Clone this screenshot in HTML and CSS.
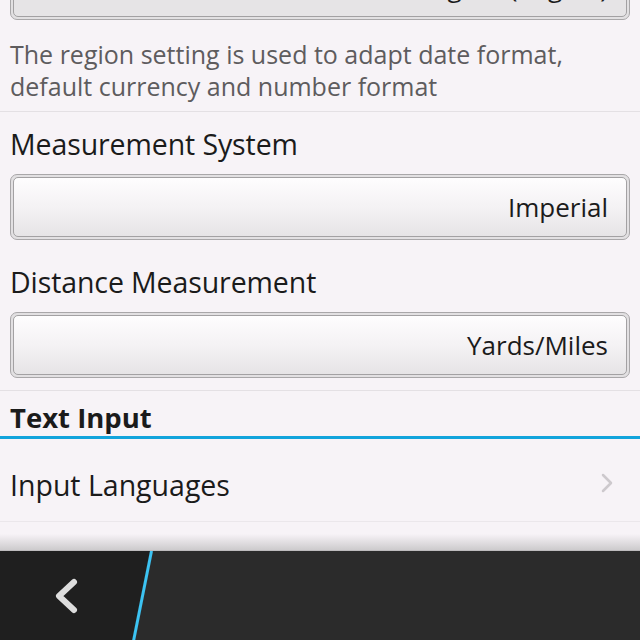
FILE: index.html
```html
<!DOCTYPE html>
<html lang="en">
<head>
    <meta charset="UTF-8">
    <meta name="viewport" content="width=device-width, initial-scale=1.0">
    <title>Language and Input</title>
    <link rel="stylesheet" href="styles.css">
</head>
<body>
    <div class="screen">
        <div class="content">
            <div class="section">
                <div class="dropdown first">
                    <div class="dropdown-face"><span>English (Region)</span></div>
                </div>
                <p class="hint">The region setting is used to adapt date format, default currency and number format</p>
            </div>

            <div class="section">
                <div class="label">Measurement System</div>
                <div class="dropdown">
                    <div class="dropdown-face"><span>Imperial</span></div>
                </div>
                <div class="label">Distance Measurement</div>
                <div class="dropdown">
                    <div class="dropdown-face"><span>Yards/Miles</span></div>
                </div>
            </div>

            <div class="group-header">Text Input</div>

            <div class="row">
                <span>Input Languages</span>
                <svg class="chevron" width="14" height="22" viewBox="0 0 14 22">
                    <path d="M3 3 L11 11 L3 19" fill="none" stroke="#cdc9cd" stroke-width="2.5" stroke-linecap="round" stroke-linejoin="round"/>
                </svg>
            </div>
        </div>

        <div class="action-bar">
            <svg class="back" width="170" height="90" viewBox="0 0 170 90">
                <polygon points="0,0 152,0 134,90 0,90" fill="#1f1f1f"/>
                <line x1="151.5" y1="0" x2="133.5" y2="90" stroke="#3cc3f2" stroke-width="3"/>
                <path d="M74 31 L59 45 L74 59" fill="none" stroke="#dddddd" stroke-width="6" stroke-linecap="round" stroke-linejoin="round"/>
            </svg>
        </div>
    </div>
</body>
</html>
```

FILE: styles.css
```css
body { margin: 0; background: #f7f3f7; font-family: "Open Sans", "Noto Sans", sans-serif; color: #1b1b1b; }
.screen { width: 640px; height: 640px; display: flex; flex-direction: column; overflow: hidden; }
.content { flex: 1; overflow: hidden; position: relative; }
.content::after { content: ""; position: absolute; left: 0; right: 0; bottom: 0; height: 16px; background: linear-gradient(to bottom, rgba(200, 198, 200, 0), rgba(200, 198, 200, 0.9)); }

.section { padding: 0 10px; border-bottom: 1px solid #e4e0e4; }
.label { font-size: 28.5px; line-height: 36px; padding-top: 14px; margin-bottom: 12px; letter-spacing: -0.1px; }
.dropdown + .label { padding-top: 24px; }

.dropdown { border: 1px solid #a9a7a9; border-radius: 7px; padding: 2px; background: #e2e0e2; height: 60px; }
.dropdown.first { margin-top: -46px; }
.dropdown-face { border: 1px solid #a3a1a3; border-radius: 5px; background: linear-gradient(to bottom, #fefdfe, #f4f2f4 50%, #e6e4e6); display: flex; align-items: center; justify-content: flex-end; padding: 0 18px; box-sizing: border-box; height: 60px; font-size: 26px; color: #1b1b1b; }
.dropdown.first .dropdown-face { background: #e6e4e6; }

.hint { margin: 0; padding: 18px 0 9px; font-size: 25px; line-height: 32px; color: #5e5c5e; }

.section + .section { padding-bottom: 12px; }

.group-header { padding: 9px 10px 0; font-size: 27.5px; font-weight: bold; line-height: 36px; border-bottom: 3px solid #12a4dc; }

.row { display: flex; align-items: center; justify-content: space-between; height: 82px; padding: 0 26px 0 10px; font-size: 28.5px; border-bottom: 1px solid #ebe7eb; }
.row span { padding-top: 9px; }
.chevron { margin-top: 5px; }

.action-bar { height: 90px; background: #2b2b2b; border-top: 1px solid #bdbbbd; box-sizing: border-box; display: flex; }
.back { display: block; }
```
